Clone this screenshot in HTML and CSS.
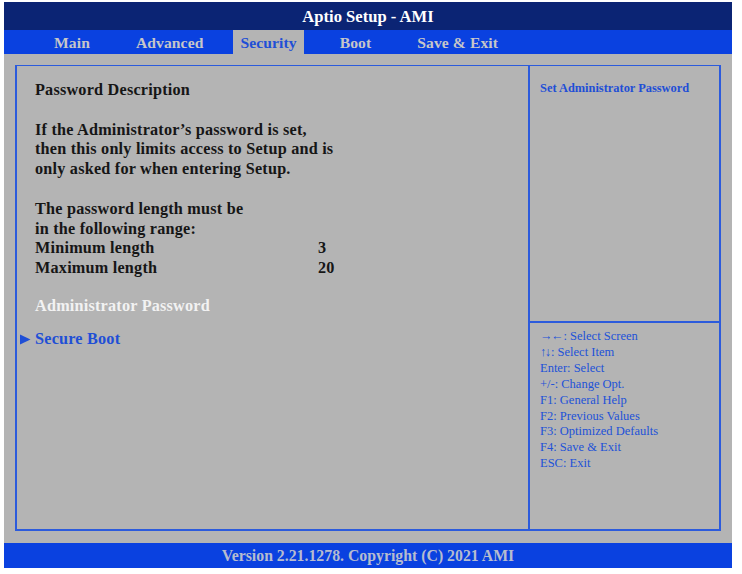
FILE: index.html
```html
<!DOCTYPE html>
<html>
<head>
<meta charset="utf-8">
<title>Aptio Setup - AMI</title>
<link rel="stylesheet" href="styles.css">
</head>
<body>
<div class="screen">
  <div class="titlebar">Aptio Setup - AMI</div>
  <div class="tabs">
    <span class="tab">Main</span>
    <span class="tab">Advanced</span>
    <span class="tab active">Security</span>
    <span class="tab">Boot</span>
    <span class="tab">Save &amp; Exit</span>
  </div>
  <div class="main">
    <div class="frame">
      <div class="left">
        <div class="line">Password Description</div>
        <div class="line blank"></div>
        <div class="line">If the Administrator’s password is set,</div>
        <div class="line">then this only limits access to Setup and is</div>
        <div class="line">only asked for when entering Setup.</div>
        <div class="line blank"></div>
        <div class="line">The password length must be</div>
        <div class="line">in the following range:</div>
        <div class="row"><span class="label">Minimum length</span><span>3</span></div>
        <div class="row"><span class="label">Maximum length</span><span>20</span></div>
        <div class="line item-white">Administrator Password</div>
        <div class="line item-sub"><svg class="tri" width="11" height="11" viewBox="0 0 11 11"><polygon points="0,0.5 10.5,5.5 0,10.5" fill="#1f4fd6"/></svg>Secure Boot</div>
      </div>
      <div class="right">
        <div class="help">Set Administrator Password</div>
        <div class="keys">
          <div><span class="arrows">→←</span>: Select Screen</div>
          <div><span class="arrows">↑↓</span>: Select Item</div>
          <div>Enter: Select</div>
          <div>+/-: Change Opt.</div>
          <div>F1: General Help</div>
          <div>F2: Previous Values</div>
          <div>F3: Optimized Defaults</div>
          <div>F4: Save &amp; Exit</div>
          <div>ESC: Exit</div>
        </div>
      </div>
    </div>
  </div>
  <div class="footer">Version 2.21.1278. Copyright (C) 2021 AMI</div>
</div>
</body>
</html>
```
FILE: styles.css
```css
html, body {
  margin: 0;
  padding: 0;
  background: #ffffff;
}
body {
  font-family: "Liberation Serif", "Times New Roman", serif;
  font-weight: bold;
}
.screen {
  margin: 2px 0 0 4px;
  width: 728px;
  display: flex;
  flex-direction: column;
}
.titlebar {
  height: 28px;
  background: #0b2474;
  color: #ffffff;
  font-size: 16.6px;
  line-height: 29px;
  text-align: center;
}
.tabs {
  height: 24px;
  background: #0a41e0;
  display: flex;
  gap: 32px;
  padding-left: 43px;
  font-size: 15.6px;
  line-height: 25px;
  letter-spacing: 0.1px;
}
.tab {
  padding: 0 7px;
  color: #c6c6c8;
}
.tab.active {
  background: #b4b4b4;
  color: #1f4fd6;
  margin-left: -9px;
  margin-right: -3px;
}
.main {
  height: 489px;
  background: #b4b4b4;
  padding: 11px 11px 12px 11px;
  box-sizing: border-box;
  display: flex;
}
.frame {
  flex: 1;
  border: 2px solid #2c5bdc;
  border-top-width: 1.5px;
  display: grid;
  grid-template-columns: 513px 1fr;
}
.left {
  border-right: 2px solid #2c5bdc;
  padding: 15px 0 0 18px;
  font-size: 16.2px;
  letter-spacing: 0.22px;
  color: #161616;
}
.line {
  height: 19.8px;
  line-height: 19.8px;
  white-space: nowrap;
}
.row {
  display: grid;
  grid-template-columns: 283px auto;
  height: 19.8px;
  line-height: 19.8px;
}
.item-white {
  color: #f2f2f2;
  margin-top: 18px;
}
.item-sub {
  color: #1f4fd6;
  margin-top: 13px;
  position: relative;
}
.tri {
  position: absolute;
  left: -15px;
  top: 4px;
}
.right {
  display: grid;
  grid-template-rows: 257px 1fr;
  color: #1f4fd6;
}
.help {
  border-bottom: 2px solid #2c5bdc;
  padding: 14px 0 0 10px;
  font-size: 12.4px;
  line-height: 16px;
}
.keys {
  padding: 6px 0 0 10px;
  font-size: 12.5px;
  font-weight: normal;
  line-height: 15.9px;
  color: #2152d8;
}
.arrows {
  letter-spacing: -1.5px;
  margin-right: 1.5px;
}
.footer {
  height: 25px;
  background: #0a41e0;
  color: #b6bccf;
  font-size: 15.8px;
  line-height: 25px;
  text-align: center;
}
```
